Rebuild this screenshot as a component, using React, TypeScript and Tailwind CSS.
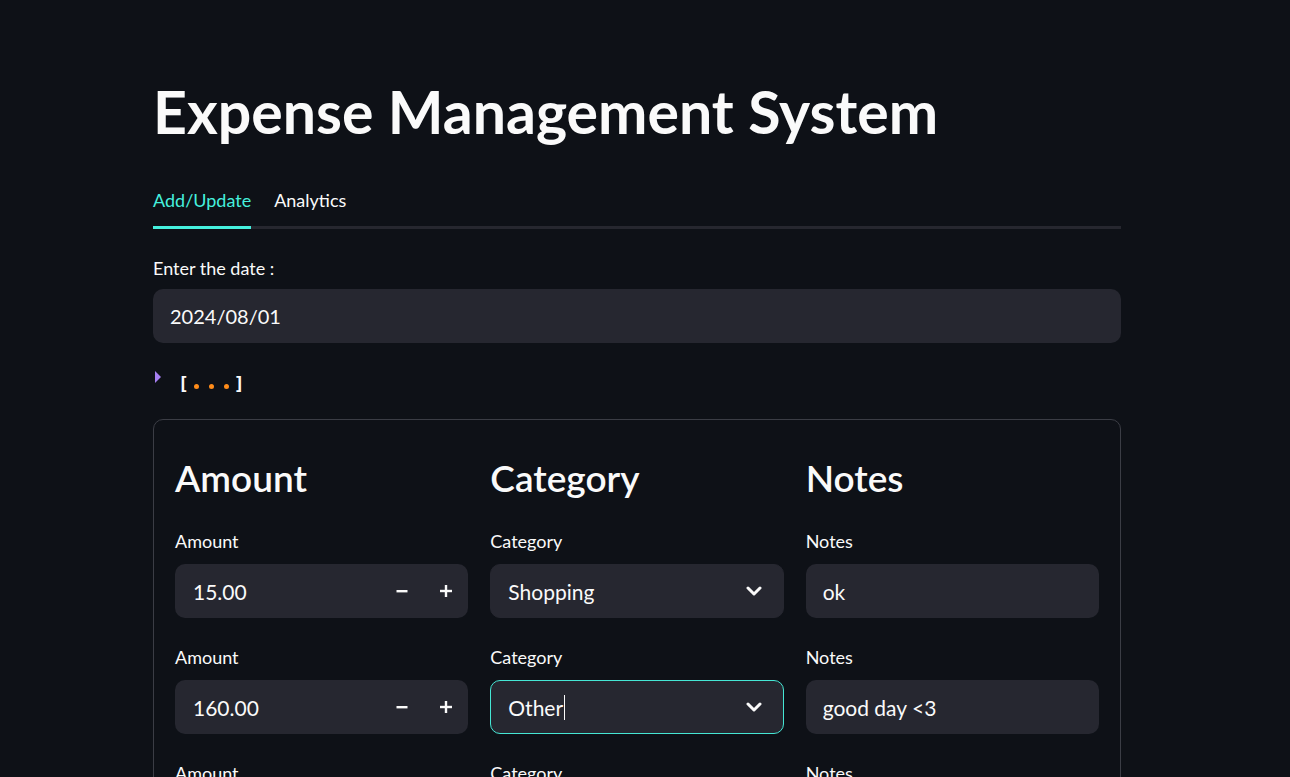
import React from 'react';

const font = { fontFamily: 'Lato, "Noto Sans", sans-serif' };

const Label = ({ text }: { text: string }) => (
  <div className="h-[24px] mb-[11px] flex items-center text-[18px] text-[#fafafa]">{text}</div>
);

const NumberInput = ({ value }: { value: string }) => (
  <div className="flex h-[54px] items-center rounded-[10px] bg-[#262730]">
    <div className="flex-1 pl-[18px] text-[21px]">{value}</div>
    <div className="flex h-full w-[44px] items-center justify-center">
      <svg width="12" height="12" viewBox="0 0 12 12">
        <rect x="0.5" y="5" width="11" height="2.4" fill="#fafafa" />
      </svg>
    </div>
    <div className="flex h-full w-[44px] items-center justify-center">
      <svg width="12" height="12" viewBox="0 0 12 12">
        <rect x="0" y="4.8" width="12" height="2.4" fill="#fafafa" />
        <rect x="4.8" y="0" width="2.4" height="12" fill="#fafafa" />
      </svg>
    </div>
  </div>
);

const Select = ({ value, focused }: { value: string; focused?: boolean }) => (
  <div
    className={
      focused
        ? 'flex h-[54px] items-center rounded-[10px] border border-[#45e6d4] bg-[#262730]'
        : 'flex h-[54px] items-center rounded-[10px] border border-[#262730] bg-[#262730]'
    }
  >
    <div className="flex flex-1 items-center pl-[17px] text-[21px]">
      {value}
      {focused && <span className="ml-[1px] inline-block h-[25px] w-[1px] bg-[#fafafa]" />}
    </div>
    <div className="flex w-[56px] items-center justify-center pr-[1px]">
      <svg width="16" height="10" viewBox="0 0 16 10">
        <path d="M2 2 L8 8 L14 2" fill="none" stroke="#fafafa" strokeWidth="3" strokeLinecap="round" strokeLinejoin="round" />
      </svg>
    </div>
  </div>
);

const TextInput = ({ value }: { value: string }) => (
  <div className="flex h-[54px] items-center rounded-[10px] bg-[#262730] pl-[17px] text-[21px]">{value}</div>
);

const rows = [
  { amount: '15.00', category: 'Shopping', notes: 'ok' },
  { amount: '160.00', category: 'Other', notes: 'good day <3', focused: true },
  { amount: '0.00', category: 'Rent', notes: '' },
];

export default function App() {
  return (
    <div className="min-h-screen overflow-hidden bg-[#0e1117] text-[#fafafa]" style={font}>
      <div className="ml-[153px] w-[968px] pt-[77px]">
        <h1 className="h-[69px] text-[59px] font-bold leading-[1.18]">Expense Management System</h1>

        {/* Tabs */}
        <div className="mt-[27px] flex gap-[23px] border-b-[3px] border-[#26272f]">
          <div className="-mb-[3px] flex h-[56px] items-center border-b-[3px] border-[#45f0de] pt-[1px] text-[18px] text-[#45f0de]">
            Add/Update
          </div>
          <div className="flex h-[53px] items-center pt-[1px] text-[18px]">Analytics</div>
        </div>

        <div className="mt-[27px] h-[24px] flex items-center text-[18px]">Enter the date :</div>
        <div className="mt-[9px] flex h-[54px] items-center rounded-[10px] bg-[#262730] pl-[17px] text-[20px]">
          2024/08/01
        </div>

        {/* collapsed json */}
        <div className="mt-[26px] flex h-[28px] items-center" style={{ fontFamily: '"DejaVu Sans Mono", monospace' }}>
          <svg width="8" height="12" viewBox="0 0 8 12" className="ml-[2px] -mt-[12px]">
            <path d="M0 0 L6 6 L0 12 Z" fill="#a67ff2" />
          </svg>
          <span className="ml-[15px] text-[18px] font-bold">[</span>
          <span className="flex items-center gap-[10px] px-[5px] pt-[6px]">
            <span className="h-[5px] w-[5px] rounded-full bg-[#ff8c1a]" />
            <span className="h-[5px] w-[5px] rounded-full bg-[#ff8c1a]" />
            <span className="h-[5px] w-[5px] rounded-full bg-[#ff8c1a]" />
          </span>
          <span className="text-[18px] font-bold">]</span>
        </div>

        {/* Form container */}
        <div className="mt-[22px] rounded-[10px] border border-[#3b3d45] px-[21px] pt-[22px] pb-[24px]">
          <div className="grid grid-cols-3 gap-x-[22px]">
            {['Amount', 'Category', 'Notes'].map((h) => (
              <h3 key={h} className="pt-[14px] text-[37px] font-semibold leading-[1.2]">
                {h}
              </h3>
            ))}
          </div>
          <div className="mt-[29px] flex flex-col gap-[27px]">
            {rows.map((r, i) => (
              <div key={i} className="grid grid-cols-3 gap-x-[22px]">
                <div>
                  <Label text="Amount" />
                  <NumberInput value={r.amount} />
                </div>
                <div>
                  <Label text="Category" />
                  <Select value={r.category} focused={r.focused} />
                </div>
                <div>
                  <Label text="Notes" />
                  <TextInput value={r.notes} />
                </div>
              </div>
            ))}
          </div>
        </div>
      </div>
    </div>
  );
}
